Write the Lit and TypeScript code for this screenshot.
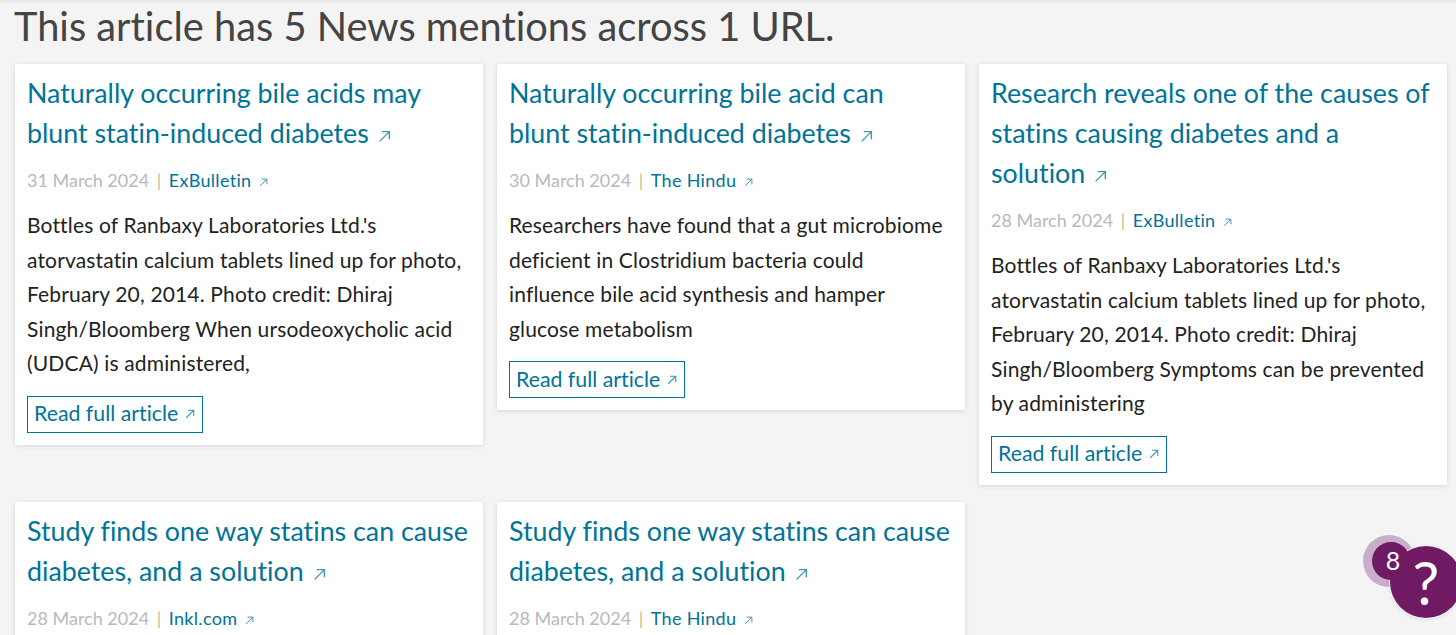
import { LitElement, html, css } from "lit";
import { customElement } from "lit/decorators.js";

const arrow = () => html`<svg class="arrow" viewBox="0 0 12 12" fill="none" stroke="currentColor" stroke-width="1.3"><path d="M1.5 10.5 10.5 1.5M3.5 1.5h7v7"/></svg>`;

const items = [
  { t: "Naturally occurring bile acids may blunt statin-induced diabetes", d: "31 March 2024", s: "ExBulletin", b: "Bottles of Ranbaxy Laboratories Ltd.'s atorvastatin calcium tablets lined up for photo, February 20, 2014. Photo credit: Dhiraj Singh/Bloomberg When ursodeoxycholic acid (UDCA) is administered," },
  { t: "Naturally occurring bile acid can\nblunt statin-induced diabetes", d: "30 March 2024", s: "The Hindu", b: "Researchers have found that a gut microbiome deficient in Clostridium bacteria could influence bile acid synthesis and hamper glucose metabolism" },
  { t: "Research reveals one of the causes of statins causing diabetes and a solution", d: "28 March 2024", s: "ExBulletin", b: "Bottles of Ranbaxy Laboratories Ltd.'s atorvastatin calcium tablets lined up for photo, February 20, 2014. Photo credit: Dhiraj Singh/Bloomberg Symptoms can be prevented by administering" },
  { t: "Study finds one way statins can cause diabetes, and a solution", d: "28 March 2024", s: "Inkl.com", b: "Bottles of Ranbaxy Laboratories Ltd.'s atorvastatin calcium tablets lined up for photo" },
  { t: "Study finds one way statins can cause diabetes, and a solution", d: "28 March 2024", s: "The Hindu", b: "Bottles of Ranbaxy Laboratories Ltd.'s atorvastatin calcium tablets lined up for photo" },
];

@customElement("app-root")
export class AppRoot extends LitElement {
  static styles = css`
    :host { display: block; height: 635px; overflow: hidden; position: relative; background: #f4f4f4; font-family: "Lato", "Noto Sans", sans-serif; font-variant-ligatures: none; }
    .topline { height: 4px; background: linear-gradient(#e4e4e4, #f4f4f4); }
    h1 { margin: 0; padding: 0 0 0 14px; height: 60px; font-size: 39.8px; line-height: 44px; font-weight: 400; color: #444; }
    .grid { display: grid; grid-template-columns: repeat(3, 468px); column-gap: 14px; row-gap: 17px; padding-left: 15px; align-items: start; }
    .card { background: #fff; padding: 9px 12px 12px; box-shadow: 0 1px 5px rgba(0,0,0,.12); }
    .title { font-size: 26.8px; line-height: 40px; color: #007398; white-space: pre-line; }
    .title .arrow { width: 13px; height: 13px; margin-left: 2px; }
    .arrow { opacity: .75; display: inline-block; vertical-align: baseline; }
    .meta { margin-top: 10px; font-size: 18px; line-height: 34px; color: #b9b9b9; }
    .sep { color: #c8b88a; margin: 0 3px; }
    .src { color: #007398; letter-spacing: 0.3px; }
    .meta .arrow { width: 9px; height: 9px; margin-left: 8px; }
    .body { margin-top: 11px; font-size: 21px; line-height: 34.56px; color: #222; letter-spacing: 0.15px; }
    .btn { display: inline-flex; align-items: center; height: 37px; box-sizing: border-box; margin-top: 15px; padding: 0 7px 2px 6px; border: 1px solid #007398; color: #007398; font-size: 21.3px; }
    .btn .arrow { width: 10px; height: 10px; margin-left: 7px; margin-top: 2px; }
    .help { position: absolute; left: 1363px; top: 535px; width: 100px; height: 90px; }
    .halo { position: absolute; left: 0; top: 0; width: 52px; height: 52px; border-radius: 50%; background: #c8aec8; }
    .dot { position: absolute; left: 9px; top: 7px; width: 38px; height: 38px; border-radius: 50%; background: #6f1a63; }
    .q { position: absolute; left: 27px; top: 11px; width: 72px; height: 72px; border-radius: 50%; background: #6f1a63; box-shadow: 0 0 0 1px rgba(255,255,255,.7), 0 1px 4px rgba(0,0,0,.15); color: #fff; font-size: 60px; font-weight: 400; line-height: 72px; text-align: center; }
    .count { position: absolute; left: 11px; top: 7px; width: 38px; color: #fff; font-size: 25px; line-height: 36px; text-align: center; }
  `;

  render() {
    return html`
      <div class="topline"></div>
      <h1>This article has 5 News mentions across 1 URL.</h1>
      <div class="grid">
        ${items.map((i) => html`
          <article class="card">
            <div class="title">${i.t} ${arrow()}</div>
            <div class="meta">${i.d} <span class="sep">|</span> <span class="src">${i.s}${arrow()}</span></div>
            <div class="body">${i.b}</div>
            <div class="btn">Read full article${arrow()}</div>
          </article>`)}
      </div>
      <div class="help">
        <div class="halo"></div>
        <div class="q">?</div>
        <div class="dot"></div>
        <div class="count">8</div>
      </div>
    `;
  }
}
